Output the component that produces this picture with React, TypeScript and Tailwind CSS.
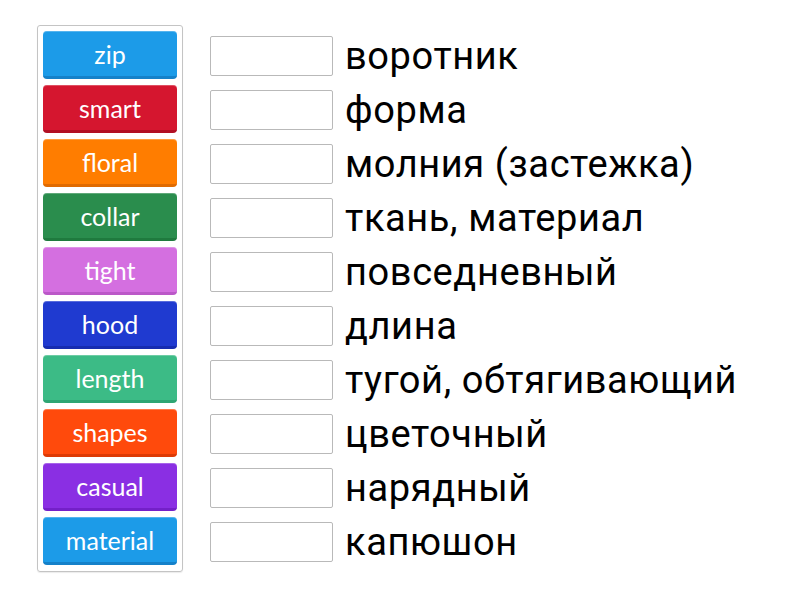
import React from "react";

const tiles: { label: string; bg: string }[] = [
  { label: "zip", bg: "bg-[#1c9be8] border-[#1581c9]" },
  { label: "smart", bg: "bg-[#d5162f] border-[#b10f24]" },
  { label: "floral", bg: "bg-[#ff7d00] border-[#e06a00]" },
  { label: "collar", bg: "bg-[#2a8d4d] border-[#1f7a3e]" },
  { label: "tight", bg: "bg-[#d46fe0] border-[#bb58c8]" },
  { label: "hood", bg: "bg-[#1f3ad0] border-[#162cb0]" },
  { label: "length", bg: "bg-[#3cbb86] border-[#2ea573]" },
  { label: "shapes", bg: "bg-[#ff4a0c] border-[#dd3a05]" },
  { label: "casual", bg: "bg-[#8a2fe3] border-[#7420c8]" },
  { label: "material", bg: "bg-[#1c9be8] border-[#1581c9]" },
];

const words = [
  "воротник",
  "форма",
  "молния (застежка)",
  "ткань, материал",
  "повседневный",
  "длина",
  "тугой, обтягивающий",
  "цветочный",
  "нарядный",
  "капюшон",
];

export default function App() {
  return (
    <div className="w-[800px] h-[600px] bg-white relative overflow-hidden">
      <div className="flex items-start pt-[25px] pl-[37px]">
        <div className="w-[146px] border border-[#c4c4c4] rounded-[3px] px-[5px] pt-[5px] pb-[6px] flex flex-col gap-[6px] shadow-[0_1px_1px_rgba(0,0,0,0.08)]">
          {tiles.map((t) => (
            <div
              key={t.label}
              className={`h-[48px] rounded-[4px] border-b-[3px] ${t.bg} flex items-center justify-center text-white text-[25px] leading-none shadow-[inset_0_1px_0_rgba(255,255,255,0.25)]`}
              style={{ fontFamily: "Lato, 'Open Sans', sans-serif" }}
            >
              <span className="pt-[1px]">{t.label}</span>
            </div>
          ))}
        </div>
        <div className="ml-[27px] pt-[11px] flex flex-col gap-[14px]">
          {words.map((w) => (
            <div key={w} className="flex items-center h-[40px]">
              <div className="w-[123px] h-[40px] border border-[#b9b9b9] rounded-[2px] bg-white" />
              <span
                className="ml-[12px] text-[38px] tracking-[0.6px] text-black leading-none whitespace-nowrap"
                style={{ fontFamily: "Roboto, 'Noto Sans', sans-serif" }}
              >
                {w}
              </span>
            </div>
          ))}
        </div>
      </div>
    </div>
  );
}
